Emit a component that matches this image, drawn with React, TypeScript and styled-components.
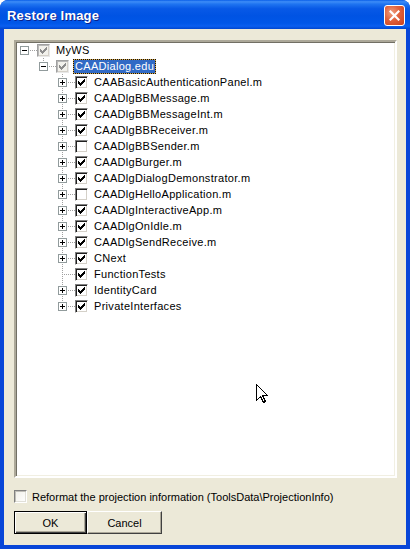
import React from "react";
import styled, { createGlobalStyle } from "styled-components";

const Global = createGlobalStyle`
  html, body { margin: 0; padding: 0; background: #ffffff; }
  body { font-family: "Liberation Sans", Arial, sans-serif; }
  * { box-sizing: border-box; }
`;

const Window = styled.div`
  position: relative;
  width: 410px;
  height: 549px;
  display: flex;
  flex-direction: column;
  background: #0846d8;
  border-radius: 8px 8px 0 0;
  overflow: hidden;
`;

const TitleBar = styled.div`
  height: 29px;
  flex: none;
  display: flex;
  align-items: center;
  padding: 0 5px 0 7px;
  background: linear-gradient(
    to bottom,
    #0a5fe8 0%,
    #3d8cf7 6%,
    #1f74f0 14%,
    #0859e6 30%,
    #0053e3 55%,
    #0057e8 80%,
    #0a5ff0 90%,
    #0046cf 100%
  );
`;

const Title = styled.div`
  flex: 1;
  color: #ffffff;
  font-family: "Liberation Sans", Arial, sans-serif;
  font-weight: bold;
  font-size: 13px;
  letter-spacing: 0.2px;
  text-shadow: 1px 1px 0 #0a1f8a;
  margin-top: 1px;
`;

const CloseButton = styled.div`
  width: 21px;
  height: 21px;
  margin-top: 2px;
  border: 1px solid #ffffff;
  border-radius: 3px;
  background: radial-gradient(circle at 35% 35%, #f0a080 0%, #e0613c 45%, #c8401a 100%);
  display: flex;
  align-items: center;
  justify-content: center;
`;

const Body = styled.div`
  flex: 1;
  margin: 0 4px 4px 4px;
  background: #ece9d8;
  display: flex;
  flex-direction: column;
  padding: 11px 9px 11px 10px;
`;

const TreeBox = styled.div`
  height: 438px;
  flex: none;
  background: #ffffff;
  border-style: solid;
  border-width: 2px;
  border-color: #aca899 #ffffff #ffffff #aca899;
  box-shadow: inset 1px 1px 0 #716f64, inset -1px -1px 0 #f1efe2;
  padding: 0;
  overflow: hidden;
`;

const TreeRow = styled.div`
  height: 16px;
  display: flex;
  align-items: center;
  font-size: 11px;
  color: #000000;
`;

const Check = styled.span<{ $tone: "on" | "off" | "grey" }>`
  width: 13px;
  height: 13px;
  flex: none;
  display: flex;
  align-items: flex-start;
  justify-content: flex-start;
  padding: 1px;
  background: ${(p) => (p.$tone === "grey" ? "#f2f1ec" : "#ffffff")};
  border-style: solid;
  border-width: 1px;
  border-color: ${(p) =>
    p.$tone === "grey" ? "#a0a0a0 #e8e8e8 #e8e8e8 #a0a0a0" : "#808080 #ffffff #ffffff #808080"};
  box-shadow: ${(p) =>
    p.$tone === "grey"
      ? "inset 1px 1px 0 #b8b8b8, inset -1px -1px 0 #d4d0c8"
      : "inset 1px 1px 0 #202020, inset -1px -1px 0 #d4d0c8"};
`;

const Label = styled.span<{ $selected?: boolean }>`
  margin-left: 4px;
  padding: 0 1px;
  height: 15px;
  line-height: 13px;
  white-space: nowrap;
  letter-spacing: 0.3px;
  border: 1px solid transparent;
  ${(p) =>
    p.$selected
      ? `
    color: #ffffff;
    border: 1px dotted #101010;
    background: linear-gradient(#316ac5, #316ac5) padding-box, #d8a848 border-box;
  `
      : ""}
`;

const OptionRow = styled.label`
  margin-top: 12px;
  height: 13px;
  display: flex;
  align-items: center;
  gap: 5px;
  font-size: 11px;
  color: #000000;
  white-space: nowrap;
`;

const OptionBox = styled.span`
  width: 13px;
  height: 13px;
  flex: none;
  background: linear-gradient(135deg, #f0efe8 0%, #ffffff 100%);
  border-style: solid;
  border-width: 1px;
  border-color: #808080 #ffffff #ffffff #808080;
  box-shadow: inset 1px 1px 0 #c0bfb8, inset -1px -1px 0 #e0dfd8;
`;

const ButtonRow = styled.div`
  margin-top: 8px;
  display: flex;
`;

const Button = styled.button<{ $default?: boolean; $w: number }>`
  width: ${(p) => p.$w}px;
  height: 23px;
  padding: 0;
  margin: 0;
  font-family: "Liberation Sans", Arial, sans-serif;
  font-size: 11px;
  color: #000000;
  background: #ece9d8;
  border-style: solid;
  border-width: 1px;
  border-color: ${(p) => (p.$default ? "#000000" : "#ffffff #404040 #404040 #ffffff")};
  box-shadow: ${(p) =>
    p.$default
      ? "inset 1px 1px 0 #ffffff, inset -1px -1px 0 #404040, inset -2px -2px 0 #aca899"
      : "inset -1px -1px 0 #aca899"};
`;

const Cursor = styled.svg`
  position: absolute;
  left: 256px;
  top: 384px;
`;

type CheckTone = "on" | "off" | "grey";

interface Item {
  label: string;
  level: number;
  expander: "plus" | "minus" | null;
  check: CheckTone;
  selected?: boolean;
  last?: boolean;
}

const items: Item[] = [
  { label: "MyWS", level: 0, expander: "minus", check: "grey", last: true },
  { label: "CAADialog.edu", level: 1, expander: "minus", check: "grey", selected: true, last: true },
  { label: "CAABasicAuthenticationPanel.m", level: 2, expander: "plus", check: "on" },
  { label: "CAADlgBBMessage.m", level: 2, expander: "plus", check: "on" },
  { label: "CAADlgBBMessageInt.m", level: 2, expander: "plus", check: "on" },
  { label: "CAADlgBBReceiver.m", level: 2, expander: "plus", check: "on" },
  { label: "CAADlgBBSender.m", level: 2, expander: "plus", check: "off" },
  { label: "CAADlgBurger.m", level: 2, expander: "plus", check: "on" },
  { label: "CAADlgDialogDemonstrator.m", level: 2, expander: "plus", check: "on" },
  { label: "CAADlgHelloApplication.m", level: 2, expander: "plus", check: "off" },
  { label: "CAADlgInteractiveApp.m", level: 2, expander: "plus", check: "on" },
  { label: "CAADlgOnIdle.m", level: 2, expander: "plus", check: "on" },
  { label: "CAADlgSendReceive.m", level: 2, expander: "plus", check: "on" },
  { label: "CNext", level: 2, expander: "plus", check: "on" },
  { label: "FunctionTests", level: 2, expander: null, check: "on" },
  { label: "IdentityCard", level: 2, expander: "plus", check: "on" },
  { label: "PrivateInterfaces", level: 2, expander: "plus", check: "on", last: true },
];

const LINE = "#a0a0a0";

function Connector({ item }: { item: Item }) {
  const L = item.level;
  const w = 21 + 19 * L;
  const cx = 8 + 19 * L;
  const bx = 4 + 19 * L;
  return (
    <svg width={w} height={16} style={{ flex: "none", display: "block" }} shapeRendering="crispEdges">
      {L >= 1 && (
        <line
          x1={cx + 0.5}
          y1={0}
          x2={cx + 0.5}
          y2={item.last ? 9 : 16}
          stroke={LINE}
          strokeWidth={1}
          strokeDasharray="1 1"
        />
      )}
      <line
        x1={item.expander ? bx + 10 : cx + 2}
        y1={8.5}
        x2={w}
        y2={8.5}
        stroke={LINE}
        strokeWidth={1}
        strokeDasharray="1 1"
      />
      {item.expander && (
        <g>
          <rect x={bx + 0.5} y={4.5} width={8} height={8} fill="#ffffff" stroke="#919b9c" />
          <line x1={bx + 2} y1={8.5} x2={bx + 7} y2={8.5} stroke="#000000" />
          {item.expander === "plus" && (
            <line x1={bx + 4.5} y1={6} x2={bx + 4.5} y2={11} stroke="#000000" />
          )}
        </g>
      )}
    </svg>
  );
}

function CheckMark({ color }: { color: string }) {
  const cols = [2, 3, 4, 3, 2, 1, 0];
  return (
    <svg width={7} height={7} style={{ display: "block", margin: "1px 0 0 1px" }} shapeRendering="crispEdges">
      {cols.map((r, c) => (
        <rect key={c} x={c} y={r} width={1} height={3} fill={color} />
      ))}
    </svg>
  );
}

function TreeItem({ item }: { item: Item }) {
  return (
    <TreeRow>
      <Connector item={item} />
      <Check $tone={item.check}>
        {item.check !== "off" && <CheckMark color={item.check === "grey" ? "#8c8c8c" : "#000000"} />}
      </Check>
      <Label $selected={item.selected}>{item.label}</Label>
    </TreeRow>
  );
}

export default function App() {
  return (
    <>
      <Global />
      <Window>
        <TitleBar>
          <Title>Restore Image</Title>
          <CloseButton>
            <svg width={11} height={11} viewBox="0 0 11 11">
              <path d="M1.5 1.5 L9.5 9.5 M9.5 1.5 L1.5 9.5" stroke="#ffffff" strokeWidth={2.2} strokeLinecap="square" />
            </svg>
          </CloseButton>
        </TitleBar>
        <Body>
          <TreeBox>
            {items.map((it) => (
              <TreeItem key={it.label} item={it} />
            ))}
          </TreeBox>
          <OptionRow>
            <OptionBox />
            <span>Reformat the projection information (ToolsData\ProjectionInfo)</span>
          </OptionRow>
          <ButtonRow>
            <Button $default $w={73}>OK</Button>
            <Button $w={75}>Cancel</Button>
          </ButtonRow>
        </Body>
        <Cursor width={13} height={20} viewBox="0 0 13 20" shapeRendering="crispEdges">
          <path
            d="M0.5 0.5 L0.5 16.5 L4.5 12.5 L7.5 18.5 L9.5 17.5 L6.5 11.5 L11.5 11.5 Z"
            fill="#ffffff"
            stroke="#000000"
            strokeWidth={1}
            strokeLinejoin="miter"
          />
        </Cursor>
      </Window>
    </>
  );
}
